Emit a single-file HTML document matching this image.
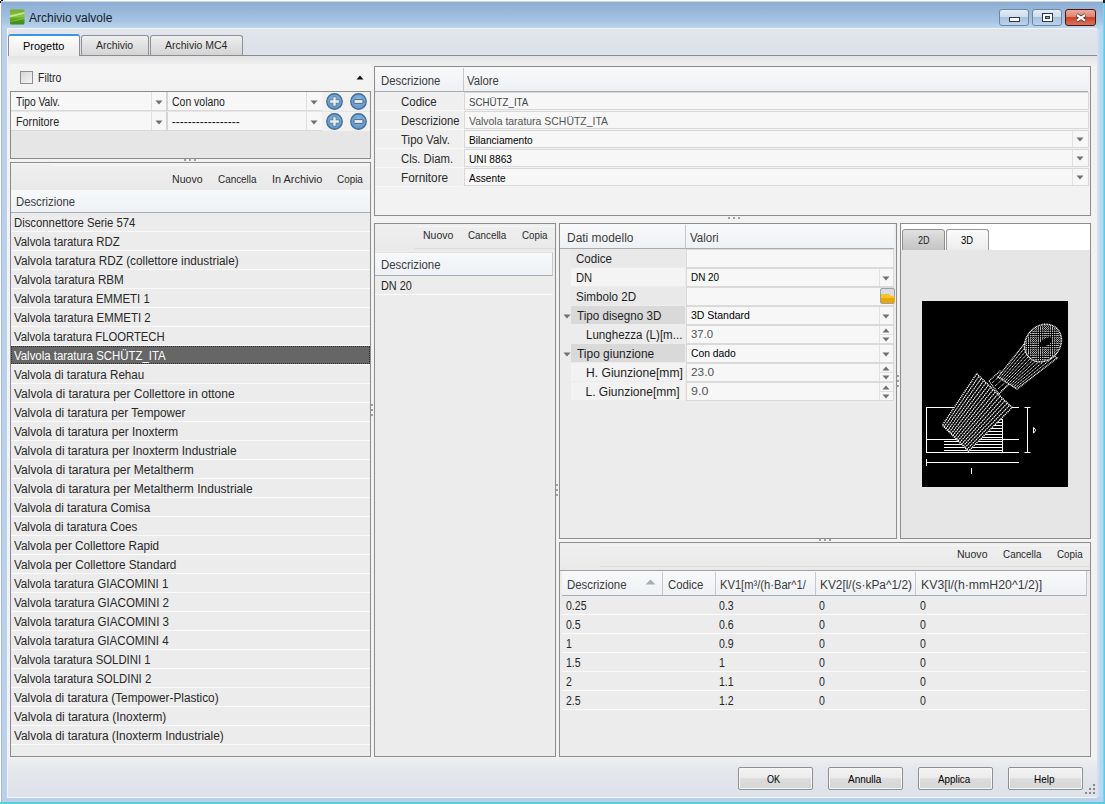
<!DOCTYPE html><html><head><meta charset="utf-8"><style>
*{margin:0;padding:0;box-sizing:border-box}
html,body{width:1105px;height:804px;overflow:hidden}
body{position:relative;background:#b9d1ea;font-family:"Liberation Sans", sans-serif;font-size:12px;color:#1e1e1e}
div,span,svg{position:absolute}
.t{white-space:nowrap;line-height:14px}
</style></head><body>
<div style="left:0px;top:0px;width:1105px;height:804px;background:#fff"></div>
<div style="left:1px;top:1px;width:1102px;height:801px;background:linear-gradient(#8eafd3 1px,#97b6d8 8px,#a9c6e4 20px,#bad4ee 25px,#b9d1ea 30px,#b9d1ea);border:1px solid #a9b9cc;border-bottom:none;border-right:none;border-top-color:#c8d8ea"></div>
<div style="left:1px;top:0px;width:2px;height:1px;background:#111"></div>
<div style="left:0px;top:1px;width:1px;height:2px;background:#111"></div>
<div style="left:1103px;top:2px;width:2px;height:802px;background:linear-gradient(90deg,#8fd6ee,#4ec5e6)"></div>
<div style="left:1103px;top:0px;width:2px;height:3px;background:#222"></div>
<div style="left:0px;top:802px;width:1105px;height:2px;background:#5ccbe0"></div>
<div style="left:1097px;top:29px;width:4px;height:768px;background:linear-gradient(90deg,#d8e3f0,#bfd2ea)"></div>
<div style="left:1101px;top:29px;width:2px;height:768px;background:#aedcf3"></div>
<div style="left:7px;top:28px;width:1090px;height:770px;background:#f2f5f9"></div>
<div style="left:8px;top:29px;width:1089px;height:768px;background:linear-gradient(#e2e5ec,#dde1e9 20px,#e0e3ea 26px,#e3e6ec)"></div>
<svg style="left:9px;top:9px" width="16" height="16" viewBox="0 0 16 16">
<defs><linearGradient id="g1" x1="0" y1="0" x2="0" y2="1"><stop offset="0" stop-color="#6fae2c"/><stop offset=".45" stop-color="#8cc63e"/><stop offset=".7" stop-color="#4f9a1c"/><stop offset="1" stop-color="#3f8a14"/></linearGradient></defs>
<path d="M1 1.5 Q1 0.5 2.5 0.5 H14 Q15.5 0.5 15.5 2 V14 Q15.5 15.5 14 15.5 H2.5 Q1 15.5 1 14 Z" fill="url(#g1)"/>
<path d="M1 6.5 L15.5 3 V4.8 L1 8.2 Z" fill="#d9efb6" opacity=".8"/>
<path d="M1 12 L15.5 9 V10 L1 13 Z" fill="#a8d86a" opacity=".5"/>
</svg>
<span class="t" style="left:29px;top:11px;font-size:12px;color:#15202e;">Archivio valvole</span>
<div style="left:999px;top:9px;width:30px;height:17px;background:linear-gradient(#e3ecf6,#cddcee 45%,#a9c1de 50%,#bcd2ec);border:1px solid #6d86a6;border-radius:3px"><div style="left:9px;top:7px;width:11px;height:5px;background:#fff;border:1px solid #2e3a48"></div></div>
<div style="left:1032px;top:9px;width:30px;height:17px;background:linear-gradient(#e3ecf6,#cddcee 45%,#a9c1de 50%,#bcd2ec);border:1px solid #6d86a6;border-radius:3px"><div style="left:9px;top:3px;width:11px;height:9px;border:1px solid #2e3a48;background:#fff"><div style="left:2px;top:2px;width:5px;height:3px;border:1px solid #2e3a48;background:#8fa8c6"></div></div></div>
<div style="left:1065px;top:9px;width:31px;height:17px;background:linear-gradient(#eeaa9c,#e08470 45%,#c8432a 50%,#d9745a);border:1px solid #431812;border-radius:3px"><svg style="left:8px;top:1px" width="14" height="13" viewBox="0 0 14 13"><path d="M2.6 3.8 L11.4 9.8 M11.4 3.8 L2.6 9.8" stroke="#4a2a26" stroke-width="3.6"/><path d="M2.9 4 L11.1 9.6 M11.1 4 L2.9 9.6" stroke="#fff" stroke-width="2.2"/></svg></div>
<div style="left:8px;top:55px;width:1089px;height:742px;background:linear-gradient(#e4e4e4,#eeeeee 8px,#f2f2f2 12px,#f2f2f2 700px,#e5e7eb 712px,#dde1e9);border-top:1px solid #898c95"></div>
<div style="left:81px;top:35px;width:68px;height:20px;background:linear-gradient(#f0f0f0,#e2e2e2 45%,#d4d4d4);border:1px solid #8e9096;border-bottom:none;border-radius:3px 3px 0 0"></div>
<span class="t" style="left:96px;top:38px;font-size:11px;color:#2a2a2a;transform:scaleX(0.949);transform-origin:0 0;">Archivio</span>
<div style="left:150px;top:35px;width:93px;height:20px;background:linear-gradient(#f0f0f0,#e2e2e2 45%,#d4d4d4);border:1px solid #8e9096;border-bottom:none;border-radius:3px 3px 0 0"></div>
<span class="t" style="left:165px;top:38px;font-size:11px;color:#2a2a2a;transform:scaleX(0.954);transform-origin:0 0;">Archivio MC4</span>
<div style="left:8px;top:34px;width:72px;height:22px;background:linear-gradient(#ffffff,#f5f5f5 40%,#ececec);border:1px solid #898c95;border-top:2px solid #3d95e6;border-bottom:none;border-radius:3px 3px 0 0"></div>
<span class="t" style="left:22.6px;top:39px;font-size:11px;color:#000;transform:scaleX(0.993);transform-origin:0 0;">Progetto</span>
<div style="left:10px;top:64px;width:361px;height:95px;background:linear-gradient(#f4f4f4,#efefef)"></div>
<div style="left:20px;top:71px;width:13px;height:13px;background:linear-gradient(135deg,#d8d8d8,#f4f4f4);border:1px solid #8f8f8f"></div>
<span class="t" style="left:37.6px;top:71px;font-size:12px;color:#262626;transform:scaleX(0.874);transform-origin:0 0;">Filtro</span>
<svg style="left:356px;top:75px" width="8" height="5" viewBox="0 0 8 5"><path d="M0.5 4.5 H7.5 L4 0.5 Z" fill="#111"/></svg>
<div style="left:10px;top:91px;width:361px;height:68px;background:#e6e6e6;border:1px solid #8c8c8c"></div>
<div style="left:11px;top:92px;width:156px;height:19px;background:#f7f7f7;border-bottom:1px solid #d9d9d9"></div>
<div style="left:151px;top:92px;width:1px;height:18px;background:#e0e0e0"></div>
<svg style="left:155px;top:100px" width="8" height="5" viewBox="0 0 8 5"><path d="M0.5 0.5 H7.5 L4 4.5 Z" fill="#707070"/></svg>
<div style="left:166px;top:92px;width:2px;height:19px;background:#d4d4d4"></div>
<div style="left:168px;top:92px;width:154px;height:19px;background:#f7f7f7;border-bottom:1px solid #d9d9d9"></div>
<div style="left:306px;top:92px;width:1px;height:18px;background:#e0e0e0"></div>
<svg style="left:310px;top:100px" width="8" height="5" viewBox="0 0 8 5"><path d="M0.5 0.5 H7.5 L4 4.5 Z" fill="#707070"/></svg>
<div style="left:322px;top:92px;width:48px;height:19px;background:#f3f1ef"></div>
<span class="t" style="left:15.8px;top:95px;font-size:12px;color:#262626;transform:scaleX(0.857);transform-origin:0 0;">Tipo Valv.</span>
<span class="t" style="left:171.8px;top:95px;font-size:12px;color:#262626;transform:scaleX(0.872);transform-origin:0 0;">Con volano</span>
<svg style="left:326px;top:93px" width="17" height="17" viewBox="0 0 16 16"><defs><radialGradient id="pm326_93" cx="0.5" cy="0.4" r="0.65"><stop offset="0" stop-color="#8fb7dc"/><stop offset="1" stop-color="#5e90c1"/></radialGradient></defs><circle cx="8" cy="8" r="7.3" fill="url(#pm326_93)" stroke="#3f6f9e" stroke-width="1.2"/><path d="M3.4 8 H12.6 M8 3.4 V12.6" stroke="#4d7aa6" stroke-width="3.6"/><path d="M3.9 8 H12.1 M8 3.9 V12.1" stroke="#f1ebe3" stroke-width="2.3"/></svg>
<svg style="left:350px;top:93px" width="17" height="17" viewBox="0 0 16 16"><defs><radialGradient id="pm350_93" cx="0.5" cy="0.4" r="0.65"><stop offset="0" stop-color="#8fb7dc"/><stop offset="1" stop-color="#5e90c1"/></radialGradient></defs><circle cx="8" cy="8" r="7.3" fill="url(#pm350_93)" stroke="#3f6f9e" stroke-width="1.2"/><rect x="3.8" y="6.2" width="8.4" height="3.6" rx="0.4" fill="#f1ebe3" stroke="#3b6994" stroke-width="0.9"/></svg>
<div style="left:11px;top:112px;width:156px;height:19px;background:#f7f7f7;border-bottom:1px solid #d9d9d9"></div>
<div style="left:151px;top:112px;width:1px;height:18px;background:#e0e0e0"></div>
<svg style="left:155px;top:120px" width="8" height="5" viewBox="0 0 8 5"><path d="M0.5 0.5 H7.5 L4 4.5 Z" fill="#707070"/></svg>
<div style="left:166px;top:112px;width:2px;height:19px;background:#d4d4d4"></div>
<div style="left:168px;top:112px;width:154px;height:19px;background:#f7f7f7;border-bottom:1px solid #d9d9d9"></div>
<div style="left:306px;top:112px;width:1px;height:18px;background:#e0e0e0"></div>
<svg style="left:310px;top:120px" width="8" height="5" viewBox="0 0 8 5"><path d="M0.5 0.5 H7.5 L4 4.5 Z" fill="#707070"/></svg>
<div style="left:322px;top:112px;width:48px;height:19px;background:#f3f1ef"></div>
<span class="t" style="left:15.8px;top:115px;font-size:12px;color:#262626;transform:scaleX(0.898);transform-origin:0 0;">Fornitore</span>
<span class="t" style="left:171.8px;top:115px;font-size:12px;color:#262626;">-----------------</span>
<svg style="left:326px;top:113px" width="17" height="17" viewBox="0 0 16 16"><defs><radialGradient id="pm326_113" cx="0.5" cy="0.4" r="0.65"><stop offset="0" stop-color="#8fb7dc"/><stop offset="1" stop-color="#5e90c1"/></radialGradient></defs><circle cx="8" cy="8" r="7.3" fill="url(#pm326_113)" stroke="#3f6f9e" stroke-width="1.2"/><path d="M3.4 8 H12.6 M8 3.4 V12.6" stroke="#4d7aa6" stroke-width="3.6"/><path d="M3.9 8 H12.1 M8 3.9 V12.1" stroke="#f1ebe3" stroke-width="2.3"/></svg>
<svg style="left:350px;top:113px" width="17" height="17" viewBox="0 0 16 16"><defs><radialGradient id="pm350_113" cx="0.5" cy="0.4" r="0.65"><stop offset="0" stop-color="#8fb7dc"/><stop offset="1" stop-color="#5e90c1"/></radialGradient></defs><circle cx="8" cy="8" r="7.3" fill="url(#pm350_113)" stroke="#3f6f9e" stroke-width="1.2"/><rect x="3.8" y="6.2" width="8.4" height="3.6" rx="0.4" fill="#f1ebe3" stroke="#3b6994" stroke-width="0.9"/></svg>
<div style="left:184px;top:159px;width:2px;height:2px;background:#a0a0a0"></div>
<div style="left:189px;top:159px;width:2px;height:2px;background:#a0a0a0"></div>
<div style="left:194px;top:159px;width:2px;height:2px;background:#a0a0a0"></div>
<div style="left:10px;top:162px;width:361px;height:595px;background:#ececec;border:1px solid #8c8c8c"></div>
<div style="left:11px;top:163px;width:359px;height:27px;background:linear-gradient(#efefef,#e9e9e9)"></div>
<div style="left:11px;top:163px;width:359px;height:1px;background:#f8f8f8"></div>
<div style="left:50px;top:165px;width:320px;height:1px;background:#f6f6f6"></div>
<span class="t" style="left:172.3px;top:172px;font-size:11px;color:#2a2a2a;transform:scaleX(0.962);transform-origin:0 0;">Nuovo</span>
<span class="t" style="left:217.7px;top:172px;font-size:11px;color:#2a2a2a;transform:scaleX(0.900);transform-origin:0 0;">Cancella</span>
<span class="t" style="left:271.9px;top:172px;font-size:11px;color:#2a2a2a;transform:scaleX(0.992);transform-origin:0 0;">In Archivio</span>
<span class="t" style="left:336.5px;top:172px;font-size:11px;color:#2a2a2a;transform:scaleX(0.900);transform-origin:0 0;">Copia</span>
<div style="left:11px;top:190px;width:359px;height:23px;background:linear-gradient(#f7f9fb,#eef1f5);border-bottom:1px solid #a9abaf"></div>
<span class="t" style="left:15.6px;top:195px;font-size:12px;color:#3c3c3c;transform:scaleX(0.943);transform-origin:0 0;">Descrizione</span>
<span class="t" style="left:14px;top:216px;font-size:12px;color:#282828;transform:scaleX(0.943);transform-origin:0 0;">Disconnettore Serie 574</span>
<div style="left:11px;top:231px;width:359px;height:1px;background:#fbfbfb"></div>
<span class="t" style="left:14px;top:235px;font-size:12px;color:#282828;transform:scaleX(0.950);transform-origin:0 0;">Valvola taratura RDZ</span>
<div style="left:11px;top:250px;width:359px;height:1px;background:#fbfbfb"></div>
<span class="t" style="left:14px;top:254px;font-size:12px;color:#282828;transform:scaleX(0.980);transform-origin:0 0;">Valvola taratura RDZ (collettore industriale)</span>
<div style="left:11px;top:269px;width:359px;height:1px;background:#fbfbfb"></div>
<span class="t" style="left:14px;top:273px;font-size:12px;color:#282828;transform:scaleX(0.970);transform-origin:0 0;">Valvola taratura RBM</span>
<div style="left:11px;top:288px;width:359px;height:1px;background:#fbfbfb"></div>
<span class="t" style="left:14px;top:292px;font-size:12px;color:#282828;transform:scaleX(0.948);transform-origin:0 0;">Valvola taratura EMMETI 1</span>
<div style="left:11px;top:307px;width:359px;height:1px;background:#fbfbfb"></div>
<span class="t" style="left:14px;top:311px;font-size:12px;color:#282828;transform:scaleX(0.955);transform-origin:0 0;">Valvola taratura EMMETI 2</span>
<div style="left:11px;top:326px;width:359px;height:1px;background:#fbfbfb"></div>
<span class="t" style="left:14px;top:330px;font-size:12px;color:#282828;transform:scaleX(0.940);transform-origin:0 0;">Valvola taratura FLOORTECH</span>
<div style="left:11px;top:345px;width:359px;height:1px;background:#fbfbfb"></div>
<div style="left:11px;top:346px;width:359px;height:18px;background:#666;outline:1px dotted #2a2a2a;outline-offset:-1px"></div>
<span class="t" style="left:14px;top:349px;font-size:12px;color:#fff;transform:scaleX(0.950);transform-origin:0 0;">Valvola taratura SCH&Uuml;TZ_ITA</span>
<div style="left:11px;top:364px;width:359px;height:1px;background:#fbfbfb"></div>
<span class="t" style="left:14px;top:368px;font-size:12px;color:#282828;transform:scaleX(0.968);transform-origin:0 0;">Valvola di taratura Rehau</span>
<div style="left:11px;top:383px;width:359px;height:1px;background:#fbfbfb"></div>
<span class="t" style="left:14px;top:387px;font-size:12px;color:#282828;">Valvola di taratura per Collettore in ottone</span>
<div style="left:11px;top:402px;width:359px;height:1px;background:#fbfbfb"></div>
<span class="t" style="left:14px;top:406px;font-size:12px;color:#282828;transform:scaleX(0.980);transform-origin:0 0;">Valvola di taratura per Tempower</span>
<div style="left:11px;top:421px;width:359px;height:1px;background:#fbfbfb"></div>
<span class="t" style="left:14px;top:425px;font-size:12px;color:#282828;transform:scaleX(0.985);transform-origin:0 0;">Valvola di taratura per Inoxterm</span>
<div style="left:11px;top:440px;width:359px;height:1px;background:#fbfbfb"></div>
<span class="t" style="left:14px;top:444px;font-size:12px;color:#282828;transform:scaleX(0.988);transform-origin:0 0;">Valvola di taratura per Inoxterm Industriale</span>
<div style="left:11px;top:459px;width:359px;height:1px;background:#fbfbfb"></div>
<span class="t" style="left:14px;top:463px;font-size:12px;color:#282828;">Valvola di taratura per Metaltherm</span>
<div style="left:11px;top:478px;width:359px;height:1px;background:#fbfbfb"></div>
<span class="t" style="left:14px;top:482px;font-size:12px;color:#282828;">Valvola di taratura per Metaltherm Industriale</span>
<div style="left:11px;top:497px;width:359px;height:1px;background:#fbfbfb"></div>
<span class="t" style="left:14px;top:501px;font-size:12px;color:#282828;transform:scaleX(0.974);transform-origin:0 0;">Valvola di taratura Comisa</span>
<div style="left:11px;top:516px;width:359px;height:1px;background:#fbfbfb"></div>
<span class="t" style="left:14px;top:520px;font-size:12px;color:#282828;transform:scaleX(0.969);transform-origin:0 0;">Valvola di taratura Coes</span>
<div style="left:11px;top:535px;width:359px;height:1px;background:#fbfbfb"></div>
<span class="t" style="left:14px;top:539px;font-size:12px;color:#282828;transform:scaleX(0.977);transform-origin:0 0;">Valvola per Collettore Rapid</span>
<div style="left:11px;top:554px;width:359px;height:1px;background:#fbfbfb"></div>
<span class="t" style="left:14px;top:558px;font-size:12px;color:#282828;transform:scaleX(0.979);transform-origin:0 0;">Valvola per Collettore Standard</span>
<div style="left:11px;top:573px;width:359px;height:1px;background:#fbfbfb"></div>
<span class="t" style="left:14px;top:577px;font-size:12px;color:#282828;transform:scaleX(0.962);transform-origin:0 0;">Valvola taratura GIACOMINI 1</span>
<div style="left:11px;top:592px;width:359px;height:1px;background:#fbfbfb"></div>
<span class="t" style="left:14px;top:596px;font-size:12px;color:#282828;transform:scaleX(0.966);transform-origin:0 0;">Valvola taratura GIACOMINI 2</span>
<div style="left:11px;top:611px;width:359px;height:1px;background:#fbfbfb"></div>
<span class="t" style="left:14px;top:615px;font-size:12px;color:#282828;transform:scaleX(0.966);transform-origin:0 0;">Valvola taratura GIACOMINI 3</span>
<div style="left:11px;top:630px;width:359px;height:1px;background:#fbfbfb"></div>
<span class="t" style="left:14px;top:634px;font-size:12px;color:#282828;transform:scaleX(0.964);transform-origin:0 0;">Valvola taratura GIACOMINI 4</span>
<div style="left:11px;top:649px;width:359px;height:1px;background:#fbfbfb"></div>
<span class="t" style="left:14px;top:653px;font-size:12px;color:#282828;transform:scaleX(0.945);transform-origin:0 0;">Valvola taratura SOLDINI 1</span>
<div style="left:11px;top:668px;width:359px;height:1px;background:#fbfbfb"></div>
<span class="t" style="left:14px;top:672px;font-size:12px;color:#282828;transform:scaleX(0.950);transform-origin:0 0;">Valvola taratura SOLDINI 2</span>
<div style="left:11px;top:687px;width:359px;height:1px;background:#fbfbfb"></div>
<span class="t" style="left:14px;top:691px;font-size:12px;color:#282828;transform:scaleX(0.981);transform-origin:0 0;">Valvola di taratura (Tempower-Plastico)</span>
<div style="left:11px;top:706px;width:359px;height:1px;background:#fbfbfb"></div>
<span class="t" style="left:14px;top:710px;font-size:12px;color:#282828;transform:scaleX(0.990);transform-origin:0 0;">Valvola di taratura (Inoxterm)</span>
<div style="left:11px;top:725px;width:359px;height:1px;background:#fbfbfb"></div>
<span class="t" style="left:14px;top:729px;font-size:12px;color:#282828;transform:scaleX(0.987);transform-origin:0 0;">Valvola di taratura (Inoxterm Industriale)</span>
<div style="left:11px;top:744px;width:359px;height:1px;background:#fbfbfb"></div>
<div style="left:371px;top:404px;width:2px;height:2px;background:#a0a0a0"></div>
<div style="left:371px;top:409px;width:2px;height:2px;background:#a0a0a0"></div>
<div style="left:371px;top:414px;width:2px;height:2px;background:#a0a0a0"></div>
<div style="left:374px;top:66px;width:717px;height:150px;background:#f2f2f2;border:1px solid #8c8c8c"></div>
<div style="left:375px;top:67px;width:713px;height:25px;background:linear-gradient(#f8f9fb,#eef1f4);border-bottom:1px solid #a9abaf"></div>
<span class="t" style="left:381.4px;top:74px;font-size:12px;color:#3c3c3c;transform:scaleX(0.948);transform-origin:0 0;">Descrizione</span>
<div style="left:463px;top:68px;width:1px;height:23px;background:#c5c7ca"></div>
<span class="t" style="left:467px;top:74px;font-size:12px;color:#3c3c3c;transform:scaleX(0.941);transform-origin:0 0;">Valore</span>
<div style="left:375px;top:92px;width:88px;height:18px;background:#efefef"></div>
<div style="left:375px;top:110px;width:88px;height:1px;background:#f8f8f8"></div>
<span class="t" style="left:400.7px;top:95px;font-size:12px;color:#2a2a2a;transform:scaleX(0.955);transform-origin:0 0;">Codice</span>
<div style="left:464px;top:92px;width:625px;height:18px;background:#f7f7f7;border:1px solid #d8d8d8"></div>
<span class="t" style="left:468.8px;top:95px;font-size:11px;color:#454545;transform:scaleX(0.885);transform-origin:0 0;">SCH&Uuml;TZ_ITA</span>
<div style="left:375px;top:111px;width:88px;height:18px;background:#efefef"></div>
<div style="left:375px;top:129px;width:88px;height:1px;background:#f8f8f8"></div>
<span class="t" style="left:400.7px;top:114px;font-size:12px;color:#2a2a2a;transform:scaleX(0.933);transform-origin:0 0;">Descrizione</span>
<div style="left:464px;top:111px;width:625px;height:18px;background:#f7f7f7;border:1px solid #d8d8d8"></div>
<span class="t" style="left:468.8px;top:114px;font-size:11px;color:#555;transform:scaleX(0.950);transform-origin:0 0;">Valvola taratura SCH&Uuml;TZ_ITA</span>
<div style="left:375px;top:130px;width:88px;height:18px;background:#efefef"></div>
<div style="left:375px;top:148px;width:88px;height:1px;background:#f8f8f8"></div>
<span class="t" style="left:400.7px;top:133px;font-size:12px;color:#2a2a2a;transform:scaleX(0.957);transform-origin:0 0;">Tipo Valv.</span>
<div style="left:464px;top:130px;width:625px;height:18px;background:#f7f7f7;border:1px solid #d8d8d8"></div>
<span class="t" style="left:468.8px;top:133px;font-size:11px;color:#000;transform:scaleX(0.922);transform-origin:0 0;">Bilanciamento</span>
<div style="left:1072px;top:131px;width:1px;height:16px;background:#e2e2e2"></div>
<svg style="left:1076px;top:137px" width="8" height="5" viewBox="0 0 8 5"><path d="M0.5 0.5 H7.5 L4 4.5 Z" fill="#707070"/></svg>
<div style="left:375px;top:149px;width:88px;height:18px;background:#efefef"></div>
<div style="left:375px;top:167px;width:88px;height:1px;background:#f8f8f8"></div>
<span class="t" style="left:400.7px;top:152px;font-size:12px;color:#2a2a2a;transform:scaleX(0.942);transform-origin:0 0;">Cls. Diam.</span>
<div style="left:464px;top:149px;width:625px;height:18px;background:#f7f7f7;border:1px solid #d8d8d8"></div>
<span class="t" style="left:468.8px;top:152px;font-size:11px;color:#000;transform:scaleX(0.926);transform-origin:0 0;">UNI 8863</span>
<div style="left:1072px;top:150px;width:1px;height:16px;background:#e2e2e2"></div>
<svg style="left:1076px;top:156px" width="8" height="5" viewBox="0 0 8 5"><path d="M0.5 0.5 H7.5 L4 4.5 Z" fill="#707070"/></svg>
<div style="left:375px;top:168px;width:88px;height:18px;background:#efefef"></div>
<div style="left:375px;top:186px;width:88px;height:1px;background:#f8f8f8"></div>
<span class="t" style="left:400.7px;top:171px;font-size:12px;color:#2a2a2a;transform:scaleX(0.981);transform-origin:0 0;">Fornitore</span>
<div style="left:464px;top:168px;width:625px;height:18px;background:#f7f7f7;border:1px solid #d8d8d8"></div>
<span class="t" style="left:468.8px;top:171px;font-size:11px;color:#000;transform:scaleX(0.920);transform-origin:0 0;">Assente</span>
<div style="left:1072px;top:169px;width:1px;height:16px;background:#e2e2e2"></div>
<svg style="left:1076px;top:175px" width="8" height="5" viewBox="0 0 8 5"><path d="M0.5 0.5 H7.5 L4 4.5 Z" fill="#707070"/></svg>
<div style="left:728px;top:217px;width:2px;height:2px;background:#a0a0a0"></div>
<div style="left:733px;top:217px;width:2px;height:2px;background:#a0a0a0"></div>
<div style="left:738px;top:217px;width:2px;height:2px;background:#a0a0a0"></div>
<div style="left:374px;top:223px;width:182px;height:534px;background:#ececec;border:1px solid #8c8c8c"></div>
<div style="left:375px;top:224px;width:180px;height:26px;background:linear-gradient(#efefef,#e9e9e9)"></div>
<div style="left:415px;top:226px;width:140px;height:1px;background:#f6f6f6"></div>
<div style="left:415px;top:248px;width:140px;height:1px;background:#dcdcdc"></div>
<span class="t" style="left:422.5px;top:228px;font-size:11px;color:#2a2a2a;transform:scaleX(0.953);transform-origin:0 0;">Nuovo</span>
<span class="t" style="left:467.7px;top:228px;font-size:11px;color:#2a2a2a;transform:scaleX(0.893);transform-origin:0 0;">Cancella</span>
<span class="t" style="left:521.7px;top:228px;font-size:11px;color:#2a2a2a;transform:scaleX(0.887);transform-origin:0 0;">Copia</span>
<div style="left:375px;top:252px;width:178px;height:24px;background:linear-gradient(#f7f9fb,#eef1f5);border-top:1px solid #e0e2e6;border-bottom:1px solid #a9abaf;border-right:1px solid #c8c8c8"></div>
<span class="t" style="left:381.2px;top:258px;font-size:12px;color:#3c3c3c;transform:scaleX(0.949);transform-origin:0 0;">Descrizione</span>
<span class="t" style="left:380.5px;top:279px;font-size:12px;color:#262626;transform:scaleX(0.906);transform-origin:0 0;">DN 20</span>
<div style="left:375px;top:294px;width:178px;height:1px;background:#fbfbfb"></div>
<div style="left:556px;top:484px;width:2px;height:2px;background:#a0a0a0"></div>
<div style="left:556px;top:489px;width:2px;height:2px;background:#a0a0a0"></div>
<div style="left:556px;top:494px;width:2px;height:2px;background:#a0a0a0"></div>
<div style="left:559px;top:223px;width:338px;height:316px;background:#ececec;border:1px solid #8c8c8c"></div>
<div style="left:560px;top:224px;width:334px;height:25px;background:linear-gradient(#f8f9fb,#eef1f4);border-bottom:1px solid #a9abaf"></div>
<span class="t" style="left:567px;top:231px;font-size:12px;color:#3c3c3c;transform:scaleX(0.996);transform-origin:0 0;">Dati modello</span>
<div style="left:685px;top:225px;width:1px;height:23px;background:#c5c7ca"></div>
<span class="t" style="left:690px;top:231px;font-size:12px;color:#3c3c3c;transform:scaleX(0.963);transform-origin:0 0;">Valori</span>
<div style="left:571px;top:249px;width:114px;height:18px;background:#e9e9e9"></div>
<span class="t" style="left:575.5px;top:252px;font-size:12px;color:#1e1e1e;transform:scaleX(0.963);transform-origin:0 0;">Codice</span>
<div style="left:686px;top:249px;width:208px;height:19px;background:#f7f7f7;border:1px solid #dadada"></div>
<div style="left:571px;top:268px;width:114px;height:18px;background:#f4f4f4"></div>
<span class="t" style="left:575.5px;top:271px;font-size:12px;color:#1e1e1e;transform:scaleX(0.935);transform-origin:0 0;">DN</span>
<div style="left:686px;top:268px;width:208px;height:19px;background:#f7f7f7;border:1px solid #dadada"></div>
<span class="t" style="left:691px;top:270px;font-size:11px;color:#000;transform:scaleX(0.900);transform-origin:0 0;">DN 20</span>
<div style="left:879px;top:269px;width:1px;height:17px;background:#e2e2e2"></div>
<svg style="left:882px;top:276px" width="8" height="5" viewBox="0 0 8 5"><path d="M0.5 0.5 H7.5 L4 4.5 Z" fill="#707070"/></svg>
<div style="left:571px;top:287px;width:114px;height:18px;background:#e9e9e9"></div>
<span class="t" style="left:575.5px;top:290px;font-size:12px;color:#1e1e1e;transform:scaleX(0.969);transform-origin:0 0;">Simbolo 2D</span>
<div style="left:686px;top:287px;width:208px;height:19px;background:#f7f7f7;border:1px solid #dadada"></div>
<svg style="left:880px;top:288px" width="15" height="16" viewBox="0 0 15 16"><rect x="0.5" y="0.5" width="14" height="15" rx="1.5" fill="#d9dde2" stroke="#9aa0a6"/><path d="M1 6 H9 L11 8 H14.5 V15 H1 Z" fill="#f7c51e"/><path d="M1 10 H14.5 V15 H1 Z" fill="#e8a80c"/></svg>
<div style="left:571px;top:306px;width:114px;height:18px;background:#d9d9d9"></div>
<svg style="left:563px;top:314px" width="8" height="5" viewBox="0 0 8 5"><path d="M0.5 0.5 H7.5 L4 4.5 Z" fill="#707070"/></svg>
<span class="t" style="left:576.5px;top:309px;font-size:12px;color:#1e1e1e;transform:scaleX(0.970);transform-origin:0 0;">Tipo disegno 3D</span>
<div style="left:686px;top:306px;width:208px;height:19px;background:#f7f7f7;border:1px solid #dadada"></div>
<span class="t" style="left:691px;top:308px;font-size:11px;color:#000;transform:scaleX(0.953);transform-origin:0 0;">3D Standard</span>
<div style="left:879px;top:307px;width:1px;height:17px;background:#e2e2e2"></div>
<svg style="left:882px;top:314px" width="8" height="5" viewBox="0 0 8 5"><path d="M0.5 0.5 H7.5 L4 4.5 Z" fill="#707070"/></svg>
<div style="left:571px;top:325px;width:114px;height:18px;background:#ececec"></div>
<span class="t" style="left:585.5px;top:328px;font-size:12px;color:#1e1e1e;transform:scaleX(0.963);transform-origin:0 0;">Lunghezza (L)[m...</span>
<div style="left:686px;top:325px;width:208px;height:19px;background:#f7f7f7;border:1px solid #dadada"></div>
<span class="t" style="left:691px;top:327px;font-size:11px;color:#555;transform:scaleX(1.033);transform-origin:0 0;">37.0</span>
<div style="left:879px;top:326px;width:1px;height:17px;background:#e2e2e2"></div>
<div style="left:880px;top:334px;width:13px;height:1px;background:#e0e0e0"></div>
<svg style="left:882px;top:328px" width="8" height="5" viewBox="0 0 8 5"><path d="M0.5 4.5 H7.5 L4 0.5 Z" fill="#707070"/></svg>
<svg style="left:882px;top:337px" width="8" height="5" viewBox="0 0 8 5"><path d="M0.5 0.5 H7.5 L4 4.5 Z" fill="#707070"/></svg>
<div style="left:571px;top:344px;width:114px;height:18px;background:#d9d9d9"></div>
<svg style="left:563px;top:352px" width="8" height="5" viewBox="0 0 8 5"><path d="M0.5 0.5 H7.5 L4 4.5 Z" fill="#707070"/></svg>
<span class="t" style="left:576.5px;top:347px;font-size:12px;color:#1e1e1e;transform:scaleX(0.995);transform-origin:0 0;">Tipo giunzione</span>
<div style="left:686px;top:344px;width:208px;height:19px;background:#f7f7f7;border:1px solid #dadada"></div>
<span class="t" style="left:691px;top:346px;font-size:11px;color:#000;transform:scaleX(0.940);transform-origin:0 0;">Con dado</span>
<div style="left:879px;top:345px;width:1px;height:17px;background:#e2e2e2"></div>
<svg style="left:882px;top:352px" width="8" height="5" viewBox="0 0 8 5"><path d="M0.5 0.5 H7.5 L4 4.5 Z" fill="#707070"/></svg>
<div style="left:571px;top:363px;width:114px;height:18px;background:#f2f2f2"></div>
<span class="t" style="left:585.5px;top:366px;font-size:12px;color:#1e1e1e;transform:scaleX(1.009);transform-origin:0 0;">H. Giunzione[mm]</span>
<div style="left:686px;top:363px;width:208px;height:19px;background:#f7f7f7;border:1px solid #dadada"></div>
<span class="t" style="left:691px;top:365px;font-size:11px;color:#555;transform:scaleX(1.076);transform-origin:0 0;">23.0</span>
<div style="left:879px;top:364px;width:1px;height:17px;background:#e2e2e2"></div>
<div style="left:880px;top:372px;width:13px;height:1px;background:#e0e0e0"></div>
<svg style="left:882px;top:366px" width="8" height="5" viewBox="0 0 8 5"><path d="M0.5 4.5 H7.5 L4 0.5 Z" fill="#707070"/></svg>
<svg style="left:882px;top:375px" width="8" height="5" viewBox="0 0 8 5"><path d="M0.5 0.5 H7.5 L4 4.5 Z" fill="#707070"/></svg>
<div style="left:571px;top:382px;width:114px;height:18px;background:#f2f2f2"></div>
<span class="t" style="left:585.5px;top:385px;font-size:12px;color:#1e1e1e;">L. Giunzione[mm]</span>
<div style="left:686px;top:382px;width:208px;height:19px;background:#f7f7f7;border:1px solid #dadada"></div>
<span class="t" style="left:691px;top:384px;font-size:11px;color:#555;transform:scaleX(1.133);transform-origin:0 0;">9.0</span>
<div style="left:879px;top:383px;width:1px;height:17px;background:#e2e2e2"></div>
<div style="left:880px;top:391px;width:13px;height:1px;background:#e0e0e0"></div>
<svg style="left:882px;top:385px" width="8" height="5" viewBox="0 0 8 5"><path d="M0.5 4.5 H7.5 L4 0.5 Z" fill="#707070"/></svg>
<svg style="left:882px;top:394px" width="8" height="5" viewBox="0 0 8 5"><path d="M0.5 0.5 H7.5 L4 4.5 Z" fill="#707070"/></svg>
<div style="left:897px;top:375px;width:2px;height:2px;background:#a0a0a0"></div>
<div style="left:897px;top:380px;width:2px;height:2px;background:#a0a0a0"></div>
<div style="left:897px;top:385px;width:2px;height:2px;background:#a0a0a0"></div>
<div style="left:900px;top:223px;width:191px;height:316px;background:#e6e6e6;border:1px solid #8c8c8c"></div>
<div style="left:901px;top:224px;width:189px;height:26px;background:#ffffff"></div>
<div style="left:902px;top:229px;width:43px;height:22px;background:linear-gradient(#e2e2e2,#cfcfcf 60%,#c4c4c4);border:1px solid #8e8e8e;border-radius:3px 3px 0 0"></div>
<span class="t" style="left:917.5px;top:233px;font-size:11px;color:#222;transform:scaleX(0.821);transform-origin:0 0;">2D</span>
<div style="left:946px;top:229px;width:43px;height:22px;background:linear-gradient(#fbfbfb,#ececec);border:1px solid #9a9a9a;border-bottom:none;border-radius:3px 3px 0 0"></div>
<span class="t" style="left:961.3px;top:233px;font-size:11px;color:#000;transform:scaleX(0.857);transform-origin:0 0;">3D</span>
<div style="left:901px;top:250px;width:189px;height:1px;background:#e6e6e6"></div>
<div style="left:922px;top:301px;width:146px;height:186px;background:#000"></div>
<svg style="left:922px;top:301px" width="146" height="186" viewBox="0 0 146 186"><path d="M4 106.5 H97 M4.5 106.5 V151.5 M4 151.5 H97 M4 138.5 H97 M80.5 118 V151.5" stroke="#fff" stroke-width="1" fill="none"/>
<path d="M46 112.5 H80 M46 115.5 H80 M46 118.5 H80 M46 121.5 H80 M46 124.5 H80 M46 127.5 H80 M46 130.5 H80 M46 133.5 H80 M46 136.5 H80 M46 140.5 H80 M46 143.5 H80 M46 146.5 H80 M46 149.5 H80 M22 140.5 H46 M22 143.5 H46 M22 146.5 H46 M22 149.5 H46 " stroke="#fff" stroke-width="1" fill="none"/>
<path d="M105.5 106.5 V151.5 M102.5 106.5 H108.5 M102.5 151.5 H108.5 M4 161.5 H97 M4.5 158 V165 M49.5 167 V173 M111.5 126.5 V132 M111.5 126.5 Q115.5 129.2 111.5 132" stroke="#fff" stroke-width="1" fill="none"/>
<path d="M54.7 72.7 L90.1 106.5 L46.4 150.2 L20.4 124.2 Z" fill="#000" stroke="#fff" stroke-width="1.4" stroke-dasharray="1.2 0.8"/>
<path d="M22.1 125.9 L57.1 75.0 M23.9 127.7 L59.4 77.2 M25.6 129.4 L61.8 79.5 M27.3 131.1 L64.1 81.7 M29.1 132.9 L66.5 84.0 M30.8 134.6 L68.9 86.2 M32.5 136.3 L71.2 88.5 M34.3 138.1 L73.6 90.7 M36.0 139.8 L75.9 93.0 M37.7 141.5 L78.3 95.2 M39.5 143.3 L80.7 97.5 M41.2 145.0 L83.0 99.7 M42.9 146.7 L85.4 102.0 M44.7 148.5 L87.7 104.2 " stroke="#fff" stroke-width="1.1" stroke-dasharray="1.6 0.6" fill="none"/>
<path d="M67.0 80.0 L78.0 70.0 L88.0 82.0 L77.0 93.0 Z" fill="#000" stroke="#fff" stroke-width="1.2" stroke-dasharray="1 0.8"/>
<path d="M70 82 L80 73 M73 85 L83 76 M76 88 L86 79 M79 90 L88 82" stroke="#fff" stroke-width="1" stroke-dasharray="1 0.8" fill="none"/>
<path d="M76.0 76.0 L107.0 37.0 L135.0 57.0 L95.0 88.0 Z" fill="#000" stroke="#fff" stroke-width="1.4" stroke-dasharray="1 0.7"/>
<path d="M77.7 77.1 L109.5 38.8 M79.5 78.2 L112.1 40.6 M81.2 79.3 L114.6 42.5 M82.9 80.4 L117.2 44.3 M84.6 81.5 L119.7 46.1 M86.4 82.5 L122.3 47.9 M88.1 83.6 L124.8 49.7 M89.8 84.7 L127.4 51.5 M91.5 85.8 L129.9 53.4 M93.3 86.9 L132.5 55.2 " stroke="#fff" stroke-width="1" stroke-dasharray="1.4 0.6" fill="none"/>
<ellipse cx="121" cy="42" rx="20" ry="17" transform="rotate(-48 121 42)" fill="#000" stroke="#fff" stroke-width="1.6" stroke-dasharray="1 0.6"/>
<clipPath id="bc"><ellipse cx="121" cy="42" rx="19" ry="16" transform="rotate(-48 121 42)"/></clipPath><path d="M100 20.4 H142 M99.4 20 V64 M100 22.8 H142 M101.8 20 V64 M100 25.2 H142 M104.2 20 V64 M100 27.6 H142 M106.6 20 V64 M100 30.0 H142 M109.0 20 V64 M100 32.4 H142 M111.4 20 V64 M100 34.8 H142 M113.8 20 V64 M100 37.2 H142 M116.2 20 V64 M100 39.6 H142 M118.6 20 V64 M100 42.0 H142 M121.0 20 V64 M100 44.4 H142 M123.4 20 V64 M100 46.8 H142 M125.8 20 V64 M100 49.2 H142 M128.2 20 V64 M100 51.6 H142 M130.6 20 V64 M100 54.0 H142 M133.0 20 V64 M100 56.4 H142 M135.4 20 V64 M100 58.8 H142 M137.8 20 V64 M100 61.2 H142 M140.2 20 V64 M100 63.6 H142 M142.6 20 V64 " clip-path="url(#bc)" stroke="#fff" stroke-width="0.8" stroke-dasharray="1 1" fill="none"/>
<ellipse cx="124" cy="41" rx="7" ry="3.5" transform="rotate(-30 124 41)" fill="#000"/></svg>
<div style="left:559px;top:542px;width:532px;height:215px;background:#ececec;border:1px solid #8c8c8c"></div>
<div style="left:560px;top:543px;width:530px;height:27px;background:linear-gradient(#efefef,#e9e9e9)"></div>
<div style="left:600px;top:545px;width:490px;height:1px;background:#f6f6f6"></div>
<div style="left:600px;top:566px;width:490px;height:1px;background:#dcdcdc"></div>
<span class="t" style="left:957.4px;top:547px;font-size:11px;color:#2a2a2a;transform:scaleX(0.959);transform-origin:0 0;">Nuovo</span>
<span class="t" style="left:1002.6px;top:547px;font-size:11px;color:#2a2a2a;transform:scaleX(0.898);transform-origin:0 0;">Cancella</span>
<span class="t" style="left:1056.6px;top:547px;font-size:11px;color:#2a2a2a;transform:scaleX(0.893);transform-origin:0 0;">Copia</span>
<div style="left:560px;top:570px;width:530px;height:1px;background:#a0a0a0"></div>
<div style="left:562px;top:571px;width:525px;height:25px;background:linear-gradient(#f8f9fb,#eef1f4);border-bottom:1px solid #a9abaf;border-right:1px solid #c5c7ca"></div>
<span class="t" style="left:567.4px;top:578px;font-size:12px;color:#3c3c3c;transform:scaleX(0.949);transform-origin:0 0;">Descrizione</span>
<div style="left:662px;top:572px;width:1px;height:23px;background:#c5c7ca"></div>
<span class="t" style="left:668px;top:578px;font-size:12px;color:#3c3c3c;transform:scaleX(0.947);transform-origin:0 0;">Codice</span>
<div style="left:715px;top:572px;width:1px;height:23px;background:#c5c7ca"></div>
<div style="left:716px;top:572px;width:99px;height:23px;overflow:hidden">
<span class="t" style="left:4px;top:6px;font-size:12px;color:#3c3c3c;transform:scaleX(0.930);transform-origin:0 0;">KV1[m&sup3;/(h&middot;Bar^1/</span>
</div>
<div style="left:815px;top:572px;width:1px;height:23px;background:#c5c7ca"></div>
<span class="t" style="left:820px;top:578px;font-size:12px;color:#3c3c3c;transform:scaleX(0.989);transform-origin:0 0;">KV2[l/(s&middot;kPa^1/2)</span>
<div style="left:915px;top:572px;width:1px;height:23px;background:#c5c7ca"></div>
<span class="t" style="left:920.9px;top:578px;font-size:12px;color:#3c3c3c;transform:scaleX(1.025);transform-origin:0 0;">KV3[l/(h&middot;mmH20^1/2)]</span>
<svg style="left:645px;top:579px" width="11" height="6" viewBox="0 0 11 6"><path d="M0.5 5.5 H10.5 L5.5 0.5 Z" fill="#a9aeb5"/></svg>
<span class="t" style="left:566px;top:599px;font-size:12px;color:#262626;transform:scaleX(0.880);transform-origin:0 0;">0.25</span>
<span class="t" style="left:719px;top:599px;font-size:12px;color:#262626;transform:scaleX(0.880);transform-origin:0 0;">0.3</span>
<span class="t" style="left:819px;top:599px;font-size:12px;color:#262626;transform:scaleX(0.880);transform-origin:0 0;">0</span>
<span class="t" style="left:920px;top:599px;font-size:12px;color:#262626;transform:scaleX(0.880);transform-origin:0 0;">0</span>
<div style="left:562px;top:614px;width:525px;height:1px;background:#fbfbfb"></div>
<span class="t" style="left:566px;top:618px;font-size:12px;color:#262626;transform:scaleX(0.880);transform-origin:0 0;">0.5</span>
<span class="t" style="left:719px;top:618px;font-size:12px;color:#262626;transform:scaleX(0.880);transform-origin:0 0;">0.6</span>
<span class="t" style="left:819px;top:618px;font-size:12px;color:#262626;transform:scaleX(0.880);transform-origin:0 0;">0</span>
<span class="t" style="left:920px;top:618px;font-size:12px;color:#262626;transform:scaleX(0.880);transform-origin:0 0;">0</span>
<div style="left:562px;top:633px;width:525px;height:1px;background:#fbfbfb"></div>
<span class="t" style="left:566px;top:637px;font-size:12px;color:#262626;transform:scaleX(0.880);transform-origin:0 0;">1</span>
<span class="t" style="left:719px;top:637px;font-size:12px;color:#262626;transform:scaleX(0.880);transform-origin:0 0;">0.9</span>
<span class="t" style="left:819px;top:637px;font-size:12px;color:#262626;transform:scaleX(0.880);transform-origin:0 0;">0</span>
<span class="t" style="left:920px;top:637px;font-size:12px;color:#262626;transform:scaleX(0.880);transform-origin:0 0;">0</span>
<div style="left:562px;top:652px;width:525px;height:1px;background:#fbfbfb"></div>
<span class="t" style="left:566px;top:656px;font-size:12px;color:#262626;transform:scaleX(0.880);transform-origin:0 0;">1.5</span>
<span class="t" style="left:719px;top:656px;font-size:12px;color:#262626;transform:scaleX(0.880);transform-origin:0 0;">1</span>
<span class="t" style="left:819px;top:656px;font-size:12px;color:#262626;transform:scaleX(0.880);transform-origin:0 0;">0</span>
<span class="t" style="left:920px;top:656px;font-size:12px;color:#262626;transform:scaleX(0.880);transform-origin:0 0;">0</span>
<div style="left:562px;top:671px;width:525px;height:1px;background:#fbfbfb"></div>
<span class="t" style="left:566px;top:675px;font-size:12px;color:#262626;transform:scaleX(0.880);transform-origin:0 0;">2</span>
<span class="t" style="left:719px;top:675px;font-size:12px;color:#262626;transform:scaleX(0.880);transform-origin:0 0;">1.1</span>
<span class="t" style="left:819px;top:675px;font-size:12px;color:#262626;transform:scaleX(0.880);transform-origin:0 0;">0</span>
<span class="t" style="left:920px;top:675px;font-size:12px;color:#262626;transform:scaleX(0.880);transform-origin:0 0;">0</span>
<div style="left:562px;top:690px;width:525px;height:1px;background:#fbfbfb"></div>
<span class="t" style="left:566px;top:694px;font-size:12px;color:#262626;transform:scaleX(0.880);transform-origin:0 0;">2.5</span>
<span class="t" style="left:719px;top:694px;font-size:12px;color:#262626;transform:scaleX(0.880);transform-origin:0 0;">1.2</span>
<span class="t" style="left:819px;top:694px;font-size:12px;color:#262626;transform:scaleX(0.880);transform-origin:0 0;">0</span>
<span class="t" style="left:920px;top:694px;font-size:12px;color:#262626;transform:scaleX(0.880);transform-origin:0 0;">0</span>
<div style="left:562px;top:709px;width:525px;height:1px;background:#fbfbfb"></div>
<div style="left:819px;top:539px;width:2px;height:2px;background:#a0a0a0"></div>
<div style="left:824px;top:539px;width:2px;height:2px;background:#a0a0a0"></div>
<div style="left:829px;top:539px;width:2px;height:2px;background:#a0a0a0"></div>
<div style="left:738px;top:767px;width:75px;height:23px;background:linear-gradient(#f2f2f2,#ececec 45%,#dcdcdc 52%,#d6d6d6);border:1px solid #8f8f8f;border-radius:2px;box-shadow:inset 0 0 0 1px #f7f7f7"></div>
<span class="t" style="left:767.4px;top:772px;font-size:11px;color:#000;transform:scaleX(0.829);transform-origin:0 0;">OK</span>
<div style="left:828px;top:767px;width:75px;height:23px;background:linear-gradient(#f2f2f2,#ececec 45%,#dcdcdc 52%,#d6d6d6);border:1px solid #8f8f8f;border-radius:2px;box-shadow:inset 0 0 0 1px #f7f7f7"></div>
<span class="t" style="left:847.6px;top:772px;font-size:11px;color:#000;transform:scaleX(0.905);transform-origin:0 0;">Annulla</span>
<div style="left:918px;top:767px;width:75px;height:23px;background:linear-gradient(#f2f2f2,#ececec 45%,#dcdcdc 52%,#d6d6d6);border:1px solid #8f8f8f;border-radius:2px;box-shadow:inset 0 0 0 1px #f7f7f7"></div>
<span class="t" style="left:938.1px;top:772px;font-size:11px;color:#000;transform:scaleX(0.892);transform-origin:0 0;">Applica</span>
<div style="left:1008px;top:767px;width:75px;height:23px;background:linear-gradient(#f2f2f2,#ececec 45%,#dcdcdc 52%,#d6d6d6);border:1px solid #8f8f8f;border-radius:2px;box-shadow:inset 0 0 0 1px #f7f7f7"></div>
<span class="t" style="left:1034.4px;top:772px;font-size:11px;color:#000;transform:scaleX(0.904);transform-origin:0 0;">Help</span>
<div style="left:1093px;top:784px;width:2px;height:2px;background:#888"></div>
<div style="left:1089px;top:788px;width:2px;height:2px;background:#888"></div>
<div style="left:1093px;top:788px;width:2px;height:2px;background:#888"></div>
<div style="left:1085px;top:792px;width:2px;height:2px;background:#888"></div>
<div style="left:1089px;top:792px;width:2px;height:2px;background:#888"></div>
<div style="left:1093px;top:792px;width:2px;height:2px;background:#888"></div>
</body></html>
